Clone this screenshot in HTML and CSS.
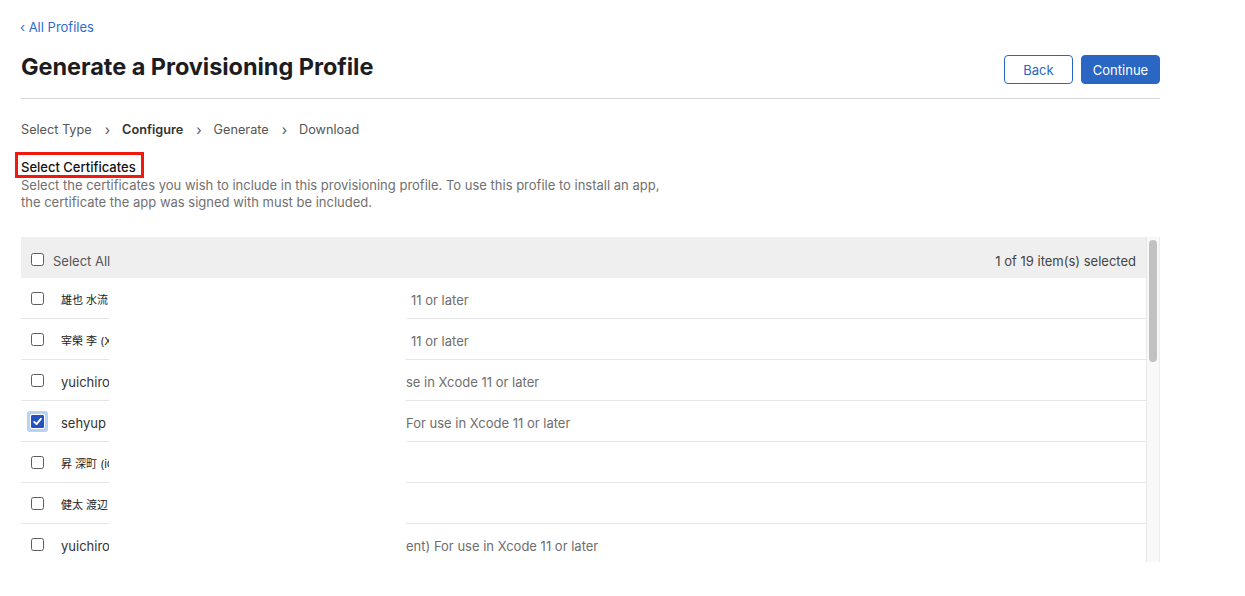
FILE: index.html
```html
<!DOCTYPE html>
<html lang="en">
<head>
<meta charset="utf-8">
<title>Generate a Provisioning Profile</title>
<link rel="stylesheet" href="styles.css">
</head>
<body>
<div class="page">
  <a class="back-link" href="#">‹ All Profiles</a>
  <div class="title-row">
    <h1 class="title">Generate a Provisioning Profile</h1>
    <div class="actions">
      <button class="btn btn-secondary">Back</button>
      <button class="btn btn-primary">Continue</button>
    </div>
  </div>
  <nav class="steps">
    <span class="step">Select Type</span>
    <span class="sep">›</span>
    <span class="step current">Configure</span>
    <span class="sep">›</span>
    <span class="step">Generate</span>
    <span class="sep">›</span>
    <span class="step">Download</span>
  </nav>
  <h2 class="section-title"><span class="highlight">Select Certificates</span></h2>
  <p class="section-desc">Select the certificates you wish to include in this provisioning profile. To use this profile to install an app,<br>the certificate the app was signed with must be included.</p>

  <div class="table-wrap">
    <div class="table">
      <div class="thead">
        <span class="cb"></span>
        <span class="select-all">Select All</span>
        <span class="count">1 of 19 item(s) selected</span>
      </div>
      <div class="row">
        <div class="cell-left"><span class="cb"></span><span class="name cjk">雄也 水流 (XXXXXXXXXX)</span></div>
        <div class="cell-gap"></div>
        <div class="cell-right"><span class="desc">11 or later</span></div>
      </div>
      <div class="row">
        <div class="cell-left"><span class="cb"></span><span class="name cjk">宰榮 李 (XXXXXXXXXX)</span></div>
        <div class="cell-gap"></div>
        <div class="cell-right"><span class="desc">11 or later</span></div>
      </div>
      <div class="row">
        <div class="cell-left"><span class="cb"></span><span class="name">yuichiro XXXXXX (XXXXXXXXXX)</span></div>
        <div class="cell-gap"></div>
        <div class="cell-right"><span class="desc tight">se in Xcode 11 or later</span></div>
      </div>
      <div class="row">
        <div class="cell-left"><span class="cb checked"><svg viewBox="0 0 13 13" width="13" height="13"><path d="M3.2 6.8 L5.5 9.1 L9.9 3.8" fill="none" stroke="#fff" stroke-width="1.9" stroke-linecap="round" stroke-linejoin="round"/></svg></span><span class="name">sehyup XXXXX (XXXXXXXXXX)</span></div>
        <div class="cell-gap"></div>
        <div class="cell-right"><span class="desc tight">For use in Xcode 11 or later</span></div>
      </div>
      <div class="row">
        <div class="cell-left"><span class="cb"></span><span class="name cjk">昇 深町 (iOS Distribution)</span></div>
        <div class="cell-gap"></div>
        <div class="cell-right"></div>
      </div>
      <div class="row">
        <div class="cell-left"><span class="cb"></span><span class="name cjk">健太 渡辺 (XXXXXXXXXX)</span></div>
        <div class="cell-gap"></div>
        <div class="cell-right"></div>
      </div>
      <div class="row">
        <div class="cell-left"><span class="cb"></span><span class="name">yuichiro XXXXXX (XXXXXXXXXX)</span></div>
        <div class="cell-gap"></div>
        <div class="cell-right"><span class="desc tight">ent) For use in Xcode 11 or later</span></div>
      </div>
    </div>
    <div class="scrollbar"><div class="thumb"></div></div>
  </div>
</div>
</body>
</html>
```
FILE: styles.css
```css
* { box-sizing: border-box; }
html, body { margin: 0; padding: 0; background: #fff; }
body {
  font-family: Inter, "Noto Sans", "Liberation Sans", "Noto Sans CJK JP", sans-serif;
  color: #333;
  font-size: 13px;
}
.page {
  width: 1139px;
  margin-left: 21px;
  padding-top: 19px;
}
.back-link {
  display: block;
  color: #2f6bd0;
  text-decoration: none;
  font-size: 13px;
  line-height: 16px;
  height: 16px;
  margin-left: -1px;
}
.title-row {
  display: flex;
  justify-content: space-between;
  align-items: flex-start;
  height: 64px;
  border-bottom: 1px solid #d6d6d6;
}
.title {
  margin: 0;
  margin-top: 17px;
  font-size: 23.5px;
  line-height: 30px;
  font-weight: 700;
  color: #1d1d1f;
  letter-spacing: -0.05px;
}
.actions {
  display: flex;
  gap: 8px;
  margin-top: 20px;
}
.btn {
  font-family: inherit;
  font-size: 13px;
  height: 29px;
  border-radius: 4px;
  padding: 0;
  cursor: pointer;
}
.btn-secondary {
  width: 69px;
  background: #fff;
  border: 1px solid #2a66c4;
  color: #2a66c4;
}
.btn-primary {
  width: 79px;
  background: #2a66c4;
  border: 1px solid #2a66c4;
  color: #fff;
}
.steps {
  display: flex;
  align-items: center;
  margin-top: 21px;
  height: 18px;
  font-size: 12.7px;
  color: #555;
}
.sep {
  margin: 0 12px 0 13px;
  color: #555;
  font-size: 14px;
}
.step.current {
  font-weight: 600;
  color: #333;
}
.section-title {
  margin: 21px 0 0 0;
  font-size: 13px;
  line-height: 17px;
  font-weight: 500;
  color: #111;
}
.highlight {
  position: relative;
  display: inline-block;
}
.highlight::after {
  content: "";
  position: absolute;
  left: -6px;
  right: -8px;
  top: -7px;
  bottom: -2px;
  border: 3.5px solid #f0190d;
}
.section-desc {
  margin: 1px 0 0 0;
  font-size: 13px;
  line-height: 17px;
  color: #707070;
}
.table-wrap {
  margin-top: 26px;
  display: flex;
  height: 325px;
  overflow: hidden;
}
.table {
  flex: 1;
  min-width: 0;
}
.thead {
  display: flex;
  align-items: flex-start;
  height: 41px;
  background: #efefef;
  padding: 16px 10px 0 10px;
  color: #555;
  line-height: 16px;
}
.thead .cb { margin-right: 9px; }
.select-all { flex: 1; }
.count { color: #444; }
.cb {
  display: inline-flex;
  flex: none;
  width: 13px;
  height: 13px;
  border: 1px solid #5d5d5d;
  border-radius: 2.5px;
  background: #fff;
}
.cb.checked {
  background: #2451c2;
  border-color: #2451c2;
  box-shadow: 0 0 0 1px #fff, 0 0 0 4px #b7d2f3;
  border-radius: 1px;
}
.cb svg { margin: -1px; }
.row {
  display: flex;
  height: 41px;
}
.cell-left {
  width: 88px;
  display: flex;
  align-items: flex-start;
  padding: 14px 0 0 10px;
  border-bottom: 1px solid #e6e6e6;
  overflow: hidden;
  white-space: nowrap;
  line-height: 16px;
}
.name {
  margin-left: 17px;
  color: #333;
  font-size: 13px;
}
.name.cjk { font-size: 11px; color: #222; }
.cell-gap { width: 297px; }
.cell-right {
  flex: 1;
  padding-top: 14px;
  line-height: 16px;
  border-bottom: 1px solid #e6e6e6;
  white-space: nowrap;
}
.desc {
  color: #6e6e6e;
  padding-left: 5px;
}
.desc.tight { padding-left: 0; }
.scrollbar {
  width: 14px;
  background: #f8f8f8;
  border-left: 1px solid #e8e8e8;
  border-right: 1px solid #ececec;
  padding: 3px 0 0 2px;
}
.thumb {
  width: 8px;
  height: 122px;
  background: #c1c1c1;
  border-radius: 4px;
}
```
